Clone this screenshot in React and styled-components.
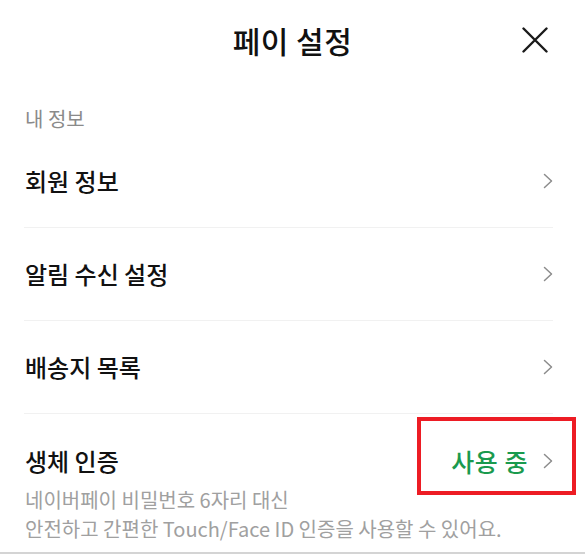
import React from "react";
import styled, { createGlobalStyle } from "styled-components";

const Global = createGlobalStyle`
  html, body { margin: 0; padding: 0; background: #fff; }
  body {
    font-family: "Noto Sans CJK KR", "Noto Sans", sans-serif;
    color: #111;
    -webkit-font-smoothing: antialiased;
  }
`;

const Page = styled.div`
  width: 585px;
  height: 554px;
  box-sizing: border-box;
  border-bottom: 2px solid #d4d4d4;
  overflow: hidden;
  display: flex;
  flex-direction: column;
`;

const Header = styled.header`
  height: 80px;
  display: grid;
  grid-template-columns: 1fr auto 1fr;
  align-items: center;
`;

const Title = styled.h1`
  grid-column: 2;
  margin: 0;
  font-size: 30px;
  font-weight: 500;
  letter-spacing: 0.5px;
  color: #111;
  line-height: 1;
`;

const Close = styled.button`
  grid-column: 3;
  justify-self: end;
  margin-right: 37px;
  width: 26px;
  height: 26px;
  padding: 0;
  border: 0;
  background: none;
  display: flex;
  align-items: center;
  justify-content: center;
`;

const Body = styled.div`
  padding: 0 32px 0 24px;
  display: flex;
  flex-direction: column;
`;

const SectionLabel = styled.div`
  padding: 25px 0 2px 1px;
  font-size: 20px;
  line-height: 28px;
  color: #8a8a8a;
`;

const Row = styled.div`
  display: flex;
  flex-direction: column;
  justify-content: ${(p) => (p.$withDesc ? "flex-start" : "center")};
  height: ${(p) => (p.$withDesc ? "auto" : "92px")};
  padding-top: ${(p) => (p.$withDesc ? "33px" : "0")};
  border-bottom: ${(p) => (p.$last ? "none" : "1px solid #f1f1f1")};
`;

const RowMain = styled.div`
  display: flex;
  align-items: center;
  justify-content: space-between;
  height: 28px;
`;

const RowTitle = styled.span`
  font-size: 24px;
  font-weight: 500;
  line-height: 28px;
  padding-left: 1px;
  color: #111;
`;

const Action = styled.span`
  position: relative;
  display: flex;
  align-items: center;
  gap: 15px;
`;

const Status = styled.span`
  font-size: 25px;
  font-weight: 500;
  line-height: 28px;
  color: #1a9a4e;
  letter-spacing: 0.5px;
`;

const Highlight = styled.span`
  position: absolute;
  left: -34px;
  right: -23px;
  top: -30px;
  bottom: -20px;
  border: 4px solid #ed1c24;
  pointer-events: none;
`;

const Desc = styled.p`
  margin: 10px 0 0;
  padding-left: 1px;
  font-size: 20px;
  line-height: 29px;
  color: #a0a0a0;
`;

const Chevron = () => (
  <svg width="10" height="16" viewBox="0 0 10 16" fill="none">
    <polyline
      points="1.5,1.5 8.5,8 1.5,14.5"
      stroke="#8c8c8c"
      strokeWidth="1.5"
      strokeLinecap="round"
      strokeLinejoin="round"
    />
  </svg>
);

const CloseIcon = () => (
  <svg width="26" height="26" viewBox="0 0 26 26" fill="none">
    <path d="M1.5 1.5 L24.5 24.5 M24.5 1.5 L1.5 24.5" stroke="#1a1a1a" strokeWidth="2.4" strokeLinecap="round" />
  </svg>
);

const items = ["회원 정보", "알림 수신 설정", "배송지 목록"];

export default function App() {
  return (
    <>
      <Global />
      <Page>
        <Header>
          <Title>페이 설정</Title>
          <Close aria-label="닫기">
            <CloseIcon />
          </Close>
        </Header>
        <Body>
          <SectionLabel>내 정보</SectionLabel>
          {items.map((t) => (
            <Row key={t}>
              <RowMain>
                <RowTitle>{t}</RowTitle>
                <Chevron />
              </RowMain>
            </Row>
          ))}
          <Row $withDesc $last>
            <RowMain>
              <RowTitle>생체 인증</RowTitle>
              <Action>
                <Status>사용 중</Status>
                <Chevron />
                <Highlight />
              </Action>
            </RowMain>
            <Desc>
              네이버페이 비밀번호 6자리 대신
              <br />
              안전하고 간편한 Touch/Face ID 인증을 사용할 수 있어요.
            </Desc>
          </Row>
        </Body>
      </Page>
    </>
  );
}
